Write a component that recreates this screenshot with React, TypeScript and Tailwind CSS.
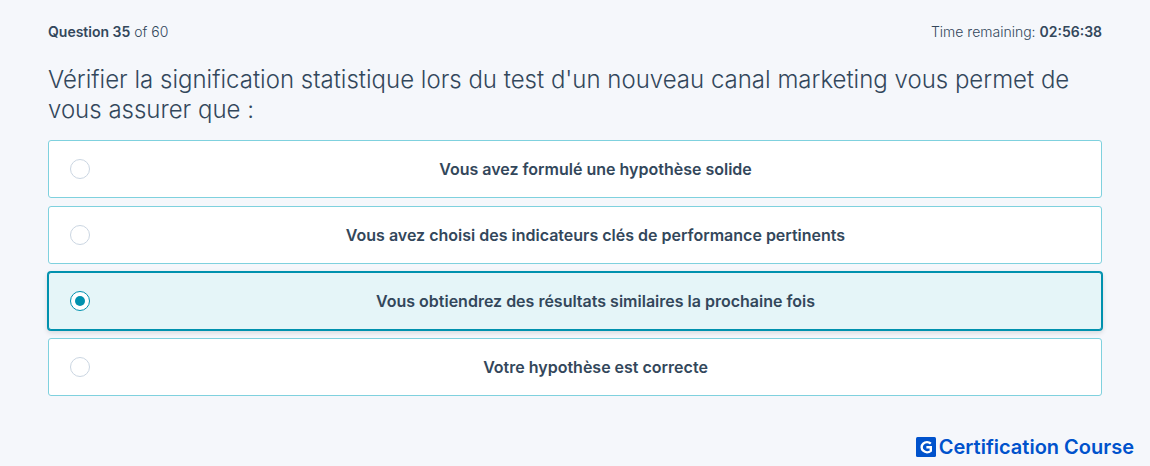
import React, { useState } from "react";

const answers = [
  "Vous avez formulé une hypothèse solide",
  "Vous avez choisi des indicateurs clés de performance pertinents",
  "Vous obtiendrez des résultats similaires la prochaine fois",
  "Votre hypothèse est correcte",
];

const Brand: React.FC = () => (
  <div className="flex items-center gap-[3px] text-[#0052cc]">
    <svg viewBox="0 0 20 20" className="size-5" aria-hidden="true">
      <rect width="20" height="20" rx="1.5" fill="currentColor" />
      <path
        d="M14.8 6.6A5.4 5 0 1 0 14.8 13.8V10.2H10.4"
        fill="none"
        stroke="white"
        strokeWidth="2.4"
      />
    </svg>
    <span className="font-['Inter',sans-serif] text-xl leading-6 font-semibold">
      Certification Course
    </span>
  </div>
);

const App: React.FC = () => {
  const [selected, setSelected] = useState(2);

  return (
    <div className="flex min-h-screen flex-col bg-[#f5f7fb] font-['Inter',sans-serif] text-[#33475b]">
      <main className="px-12 pt-[22px]">
        <header className="flex items-center justify-between text-sm leading-5 font-light">
          <p>
            <span className="font-semibold">Question 35</span> of 60
          </p>
          <p>
            Time remaining: <span className="font-semibold">02:56:38</span>
          </p>
        </header>

        <h1
          id="question"
          className="mt-[23px] text-2xl leading-[30px] font-light"
        >
          Vérifier la signification statistique lors du test d'un nouveau canal
          marketing vous permet de vous assurer que :
        </h1>

        <div
          role="radiogroup"
          aria-labelledby="question"
          className="mt-[15px] flex flex-col gap-2"
        >
          {answers.map((answer, index) => (
            <label
              key={answer}
              className="flex min-h-[58px] cursor-pointer items-center rounded-[3px] border border-[#7fd1de] bg-white pl-[21px] has-checked:border-[#0091ae] has-checked:bg-[#e5f5f8] has-checked:shadow-[0_0_0_1px_#0091ae,0_2px_5px_1px_rgba(0,0,0,0.12)]"
            >
              <input
                type="radio"
                name="answer"
                checked={selected === index}
                onChange={() => setSelected(index)}
                className="grid size-5 shrink-0 appearance-none place-items-center rounded-full border border-[#cbd6e2] bg-white before:size-2.5 before:rounded-full checked:border-[#0091ae] checked:before:bg-[#0091ae]"
              />
              <span className="flex-1 text-center text-base leading-6 font-semibold">
                {answer}
              </span>
            </label>
          ))}
        </div>
      </main>

      <footer className="mt-auto flex justify-end pt-4 pr-4 pb-[7px]">
        <Brand />
      </footer>
    </div>
  );
};

export default App;
